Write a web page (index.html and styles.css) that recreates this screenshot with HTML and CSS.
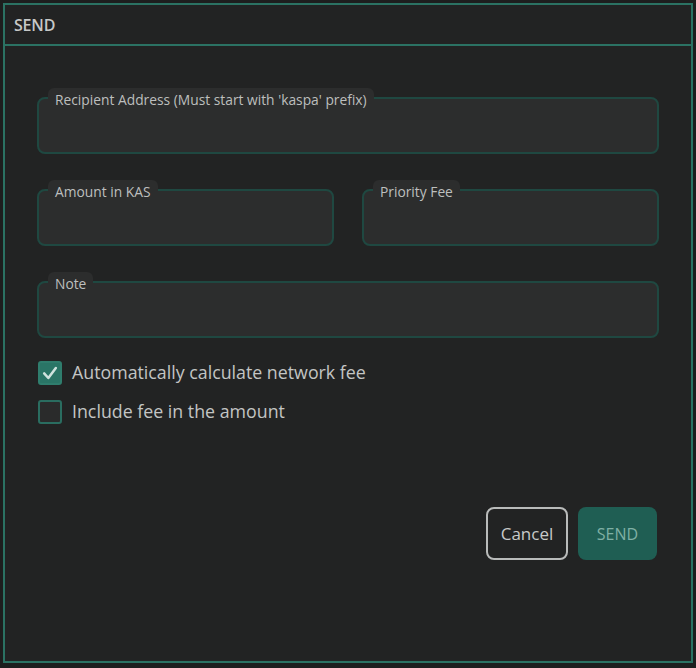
FILE: index.html
```html
<!DOCTYPE html>
<html>
<head>
<meta charset="utf-8">
<link rel="stylesheet" href="styles.css">
</head>
<body>
<div class="dialog">
  <div class="header">SEND</div>
  <div class="content">
    <div class="field">
      <span class="label">Recipient Address (Must start with 'kaspa' prefix)</span>
    </div>
    <div class="row">
      <div class="field">
        <span class="label">Amount in KAS</span>
      </div>
      <div class="field">
        <span class="label">Priority Fee</span>
      </div>
    </div>
    <div class="field">
      <span class="label">Note</span>
    </div>
    <div class="checks">
      <label class="check">
        <span class="box checked">
          <svg viewBox="0 0 24 24" width="24" height="24"><path d="M5 12.5 L10 18 L19 6" fill="none" stroke="#cfe3de" stroke-width="3" stroke-linecap="round" stroke-linejoin="round"/></svg>
        </span>
        <span class="check-text">Automatically calculate network fee</span>
      </label>
      <label class="check">
        <span class="box"></span>
        <span class="check-text">Include fee in the amount</span>
      </label>
    </div>
    <div class="actions">
      <button class="btn cancel">Cancel</button>
      <button class="btn send">SEND</button>
    </div>
  </div>
</div>
</body>
</html>
```

FILE: styles.css
```css
html, body {
  margin: 0;
  padding: 0;
  background: #1d1e1e;
  width: 696px;
  height: 668px;
  overflow: hidden;
  font-family: "Open Sans", "Noto Sans", sans-serif;
}
.dialog {
  margin: 3px;
  width: 686px;
  height: 656px;
  border: 2px solid #2b7263;
  background: #222323;
  display: flex;
  flex-direction: column;
}
.header {
  border-bottom: 2px solid #2b7263;
  box-sizing: border-box;
  height: 41px;
  padding-left: 9px;
  display: flex;
  align-items: center;
  font-size: 16px;
  font-weight: 600;
  color: #c6c8c7;
  letter-spacing: -0.2px;
}
.content {
  flex: 1;
  padding: 51px 32px 0 32px;
  display: flex;
  flex-direction: column;
}
.field {
  position: relative;
  height: 57px;
  box-sizing: border-box;
  border: 2px solid #1f4841;
  border-radius: 8px;
  background: #2c2d2d;
  margin-bottom: 35px;
}
.row {
  display: flex;
  gap: 28px;
}
.row .field {
  flex: 1;
}
.label {
  position: absolute;
  top: -11px;
  left: 9px;
  background: #2c2d2d;
  padding: 3px 7px 3px 7px;
  border-radius: 6px 6px 0 0;
  font-size: 13.8px;
  line-height: 17px;
  color: #bdbfbe;
}
.checks {
  margin-top: -12px;
  display: flex;
  flex-direction: column;
  gap: 15px;
}
.check {
  display: flex;
  align-items: center;
  gap: 10px;
  padding-left: 1px;
}
.box {
  width: 24px;
  height: 24px;
  box-sizing: border-box;
  border: 2px solid #2a6d60;
  border-radius: 3px;
  background: #2a2b2b;
  display: flex;
  align-items: center;
  justify-content: center;
}
.box svg {
  width: 20px;
  height: 20px;
}
.box.checked {
  background: #2a7566;
  border-color: #2f7d6d;
}
.check-text {
  font-size: 17.8px;
  color: #c3c5c4;
  line-height: 24px;
  position: relative;
  top: -1px;
}
.actions {
  margin-top: 83px;
  display: flex;
  justify-content: flex-end;
  gap: 10px;
  padding-right: 2px;
}
.btn {
  height: 53px;
  border-radius: 8px;
  font-family: "Open Sans", "Noto Sans", sans-serif;
  font-size: 16px;
  box-sizing: border-box;
}
.cancel {
  width: 82px;
  background: transparent;
  border: 2px solid #b9bbba;
  color: #c8cac9;
  font-size: 17px;
}
.send {
  width: 79px;
  background: #1f5e53;
  border: none;
  color: #7fb0a5;
}
```
